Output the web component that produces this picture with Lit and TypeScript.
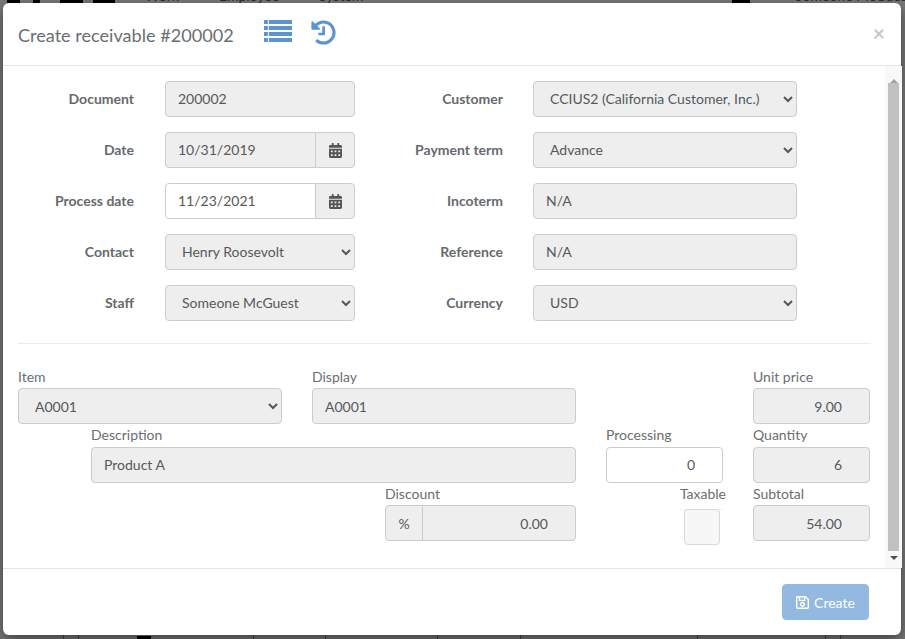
import { LitElement, css, html, type TemplateResult } from 'lit';
import { customElement } from 'lit/decorators.js';

const calendar = html`<svg class="cal" viewBox="0 0 448 512" fill="currentColor"><path d="M0 464c0 26.500 21.500 48 48 48h352c26.500 0 48-21.500 48-48V192H0v272zm320-196c0-6.600 5.400-12 12-12h40c6.600 0 12 5.400 12 12v40c0 6.600-5.400 12-12 12h-40c-6.600 0-12-5.400-12-12v-40zm0 128c0-6.600 5.400-12 12-12h40c6.600 0 12 5.400 12 12v40c0 6.600-5.400 12-12 12h-40c-6.600 0-12-5.400-12-12v-40zM192 268c0-6.600 5.400-12 12-12h40c6.600 0 12 5.400 12 12v40c0 6.600-5.400 12-12 12h-40c-6.600 0-12-5.400-12-12v-40zm0 128c0-6.600 5.400-12 12-12h40c6.600 0 12 5.400 12 12v40c0 6.600-5.400 12-12 12h-40c-6.600 0-12-5.400-12-12v-40zM64 268c0-6.600 5.400-12 12-12h40c6.600 0 12 5.400 12 12v40c0 6.600-5.400 12-12 12H76c-6.600 0-12-5.400-12-12v-40zm0 128c0-6.600 5.400-12 12-12h40c6.600 0 12 5.400 12 12v40c0 6.600-5.400 12-12 12H76c-6.600 0-12-5.400-12-12v-40zM400 64h-48V16c0-8.800-7.200-16-16-16h-32c-8.800 0-16 7.200-16 16v48H160V16c0-8.800-7.200-16-16-16h-32c-8.800 0-16 7.200-16 16v48H48C21.500 64 0 85.500 0 112v48h448v-48c0-26.500-21.500-48-48-48z"/></svg>`;

// page behind the modal, only its edges show
const NAV = [
  { text: 'Work', left: 145 },
  { text: 'Employee', left: 219 },
  { text: 'System', left: 319 },
  { text: 'Someone McGuest', left: 795 },
];
const BLOBS = [
  { left: 7, width: 13, top: 0 },
  { left: 33, width: 7, top: 0 },
  { left: 60, width: 23, top: 0 },
  { left: 93, width: 22, top: 0 },
  { left: 732, width: 18, top: 0 },
  { left: 137, width: 14, top: 636 },
];
const RULES = [63, 78, 253, 325, 437, 520, 697, 825, 840];

@customElement('app-root')
export class AppRoot extends LitElement {
  private box(value: string, cls = ''): TemplateResult {
    return html`<input class="ctl ${cls}" disabled .value=${value} />`;
  }

  private select(value: string): TemplateResult {
    return html`<select class="ctl" disabled><option>${value}</option></select>`;
  }

  private date(value: string, active = false): TemplateResult {
    return html`<div class="date">
      <input class="ctl" ?disabled=${!active} .value=${value} />
      <div class="addon">${calendar}</div>
    </div>`;
  }

  private row(label: string, control: TemplateResult): TemplateResult {
    return html`<label class="lbl">${label}</label>${control}`;
  }

  private field(label: string, control: TemplateResult, cls: string): TemplateResult {
    return html`<div class="field ${cls}"><label>${label}</label>${control}</div>`;
  }

  override render(): TemplateResult {
    return html`
      <div class="behind">
        ${NAV.map((n) => html`<span class="nav" style="left:${n.left}px">${n.text}</span>`)}
        ${BLOBS.map((b) => html`<i class="blob" style="left:${b.left}px;width:${b.width}px;top:${b.top}px"></i>`)}
        ${RULES.map((x) => html`<i class="rule" style="left:${x}px"></i>`)}
      </div>
      <div class="modal">
        <header>
          <h5>Create receivable #200002</h5>
          <svg class="ico list" viewBox="0 0 29 22" preserveAspectRatio="none" fill="currentColor"><path d="M0 0h4v4H0zM5 0h24v4H5zM0 6h4v4H0zM5 6h24v4H5zM0 12h4v4H0zM5 12h24v4H5zM0 18h4v4H0zM5 18h24v4H5z"/></svg>
          <svg class="ico hist" viewBox="0 0 512 512" fill="currentColor"><path d="M504 255.500c.3 136.600-111.100 248.400-247.700 248.500-59 0-113.200-20.500-155.800-54.900-11.100-8.900-11.900-25.500-1.800-35.600l11.300-11.300c8.600-8.600 22.400-9.600 31.900-2 31.400 24.900 71.100 39.800 114.100 39.800 101.200 0 183-81.900 183-183 0-101.200-81.900-183-183-183-48.600 0-92.700 18.900-125.400 49.700l50.500 50.500c10.100 10.100 2.900 27.300-11.300 27.300H24c-8.800 0-16-7.200-16-16V40.100c0-14.300 17.200-21.400 27.300-11.300l49.400 49.400C129.400 33.800 189.400 8 256 8c136.800 0 247.700 110.800 248 247.500zM231 128h55v184H150v-52h81z"/></svg>
          <span class="close">×</span>
        </header>
        <div class="body">
          <div class="scroll">
            <div class="top-form">
              <div class="grid">
                ${this.row('Document', this.box('200002'))}
                ${this.row('Date', this.date('10/31/2019'))}
                ${this.row('Process date', this.date('11/23/2021', true))}
                ${this.row('Contact', this.select('Henry Roosevolt'))}
                ${this.row('Staff', this.select('Someone McGuest'))}
              </div>
              <div class="grid right">
                ${this.row('Customer', this.select('CCIUS2 (California Customer, Inc.)'))}
                ${this.row('Payment term', this.select('Advance'))}
                ${this.row('Incoterm', this.box('N/A'))}
                ${this.row('Reference', this.box('N/A'))}
                ${this.row('Currency', this.select('USD'))}
              </div>
            </div>
            <hr />
            <div class="lines">
              ${this.field('Item', this.select('A0001'), 'item')}
              ${this.field('Display', this.box('A0001'), 'display')}
              ${this.field('Unit price', this.box('9.00', 'num'), 'price')}
              ${this.field('Description', this.box('Product A'), 'desc')}
              ${this.field('Processing', html`<input class="ctl num" .value=${'0'} />`, 'proc')}
              ${this.field('Quantity', this.box('6', 'num'), 'qty')}
              ${this.field(
                'Discount',
                html`<div class="disc"><div class="pct">%</div>${this.box('0.00', 'num')}</div>`,
                'discount'
              )}
              ${this.field('Taxable', html`<div class="check-wrap"><div class="check"></div></div>`, 'tax')}
              ${this.field('Subtotal', this.box('54.00', 'num'), 'sub')}
            </div>
          </div>
          <div class="bar">
            <div class="arrow up"></div>
            <div class="thumb"></div>
            <div class="arrow down"></div>
          </div>
        </div>
        <footer>
          <button disabled>
            <svg viewBox="0 0 448 512" fill="currentColor"><path d="M433.900 129.900l-83.900-83.900A48 48 0 0 0 316.100 32H48C21.500 32 0 53.500 0 80v352c0 26.500 21.500 48 48 48h352c26.500 0 48-21.500 48-48V163.900a48 48 0 0 0-14.100-34zM272 80v80H144V80h128zm122 352H54a6 6 0 0 1-6-6V86a6 6 0 0 1 6-6h42v104c0 13.300 10.700 24 24 24h176c13.300 0 24-10.700 24-24V83.900l78.200 78.200a6 6 0 0 1 1.800 4.200V426a6 6 0 0 1-6 6zM224 232c-48.500 0-88 39.500-88 88s39.500 88 88 88 88-39.500 88-88-39.500-88-88-88zm0 128c-22.100 0-40-17.900-40-40s17.900-40 40-40 40 17.900 40 40-17.900 40-40 40z"/></svg>
            Create
          </button>
        </footer>
      </div>
    `;
  }

  static override styles = css`
    :host {
      display: block;
      position: relative;
      width: 905px;
      height: 639px;
      box-sizing: border-box;
      padding: 3px 4px 4px 3px;
      background: #7a7a7a;
      overflow: hidden;
      font-family: Lato, sans-serif;
      font-size: 14px;
      color: #666a6e;
    }
    * { box-sizing: border-box; }
    .nav {
      position: absolute;
      top: -13px;
      font-size: 14px;
      white-space: nowrap;
      color: #2a2a2a;
    }
    .blob {
      position: absolute;
      height: 3px;
      background: #000;
    }
    .rule {
      position: absolute;
      top: 632px;
      width: 1px;
      height: 7px;
      background: #444;
    }
    .modal {
      position: relative;
      height: 100%;
      display: flex;
      flex-direction: column;
      background: #fff;
      border-radius: 6px;
      box-shadow: 0 5px 15px rgba(0, 0, 0, 0.5);
    }
    header {
      flex: none;
      height: 63px;
      display: flex;
      align-items: center;
      padding: 0 15px;
      border-bottom: 1px solid #e5e5e5;
    }
    h5 {
      margin: 1px 0 0;
      font-size: 18.100px;
      font-weight: 400;
      color: #6a6e72;
    }
    .ico { color: #5b93d3; flex: none; }
    .list { width: 28px; height: 22px; margin: -6px 0 0 30px; }
    .hist { width: 25px; height: 25px; margin: -4px 0 0 19px; }
    .close {
      margin: -4px 0 0 auto;
      padding-right: 1px;
      font-size: 21px;
      font-weight: 700;
      color: #c5c7c9;
      line-height: 1;
    }
    .body {
      flex: 1;
      min-height: 0;
      display: flex;
    }
    .scroll {
      flex: 1;
      min-width: 0;
      padding: 15px 14px 0 15px;
    }
    .top-form { display: flex; }
    .grid {
      display: grid;
      grid-template-columns: 116px 190px;
      column-gap: 31px;
      row-gap: 15px;
      align-items: center;
      align-content: start;
    }
    .grid.right {
      margin-left: 31px;
      grid-template-columns: 117px 264px;
      column-gap: 30px;
    }
    .lbl {
      padding-bottom: 2px;
      font-weight: 700;
      text-align: right;
    }
    .ctl {
      width: 100%;
      height: 36px;
      margin: 0;
      padding: 0 12px;
      background-color: #eee;
      border: 1px solid #ccc;
      border-radius: 4px;
      outline: none;
      font: inherit;
      color: #55595c;
      opacity: 1;
    }
    .grid .ctl { padding-bottom: 2px; }
    input.ctl:not(:disabled) { background-color: #fff; }
    .ctl.num { text-align: right; padding-right: 27px; }
    .date { display: flex; }
    .date .ctl { flex: 1; min-width: 0; border-radius: 4px 0 0 4px; }
    .addon {
      flex: none;
      width: 40px;
      height: 36px;
      margin-left: -1px;
      display: flex;
      align-items: center;
      justify-content: center;
      background: #eee;
      border: 1px solid #ccc;
      border-radius: 0 4px 4px 0;
    }
    .cal { width: 13px; height: 15px; color: #555; }
    hr {
      margin: 22px 0 0;
      border: 0;
      border-top: 1px solid #e9ecef;
    }
    .lines {
      margin-top: 23px;
      display: grid;
      grid-template-columns: 73px 191px 30px 73px 191px 30px 117px 30px 117px;
      grid-auto-rows: 58.500px;
    }
    .field { display: flex; flex-direction: column; }
    .field label { line-height: 19px; margin-bottom: 2px; color: #6a6e72; }
    .desc label, .proc label, .qty label { line-height: 18px; margin-bottom: 3px; }
    .item { grid-column: 1 / 3; }
    .display { grid-column: 4 / 6; }
    .price { grid-column: 9; }
    .desc { grid-column: 2 / 6; }
    .proc { grid-column: 7; }
    .qty { grid-column: 9; }
    .discount { grid-column: 5 / 6; }
    .tax { grid-column: 7; align-items: flex-end; }
    .sub { grid-column: 9; }
    .tax label { margin-right: -3px; }
    .disc { display: flex; }
    .pct {
      flex: none;
      width: 38px;
      height: 36px;
      margin-right: -1px;
      display: flex;
      align-items: center;
      justify-content: center;
      background: #eee;
      border: 1px solid #ccc;
      border-radius: 4px 0 0 4px;
      color: #55595c;
    }
    .disc .ctl { flex: 1; min-width: 0; border-radius: 0 4px 4px 0; }
    .check-wrap {
      width: 43px;
      margin-top: 4px;
      padding-right: 3px;
      display: flex;
      justify-content: flex-end;
      border-top: 1px solid #f2f2f2;
    }
    .check {
      width: 36px;
      height: 36px;
      margin-top: -1px;
      background: #f7f7f7;
      border: 1px solid #d8d8d8;
      border-radius: 4px;
    }
    .bar {
      flex: none;
      width: 17px;
      margin-right: -1px;
      display: flex;
      flex-direction: column;
      align-items: center;
      background: #f8f8f8;
    }
    .thumb {
      flex: 1;
      width: 11px;
      background: #c0c0c0;
    }
    .arrow {
      flex: none;
      width: 0;
      height: 12px;
      margin-top: 5px;
      border-left: 4px solid transparent;
      border-right: 4px solid transparent;
    }
    .arrow.up { border-bottom: 4px solid #a3a3a3; }
    .arrow.down { border-top: 4px solid #505050; }
    footer {
      flex: none;
      height: 67px;
      display: flex;
      align-items: center;
      justify-content: flex-end;
      padding: 0 32px 0 15px;
      border-top: 1px solid #e5e5e5;
    }
    button {
      display: flex;
      align-items: center;
      gap: 5px;
      height: 36px;
      width: 87px;
      justify-content: center;
      background: #94b9e0;
      border: 1px solid #94b9e0;
      border-radius: 4px;
      color: #fff;
      font: inherit;
    }
    button svg { width: 13px; height: 15px; }
  `;
}

declare global {
  interface HTMLElementTagNameMap {
    'app-root': AppRoot;
  }
}
